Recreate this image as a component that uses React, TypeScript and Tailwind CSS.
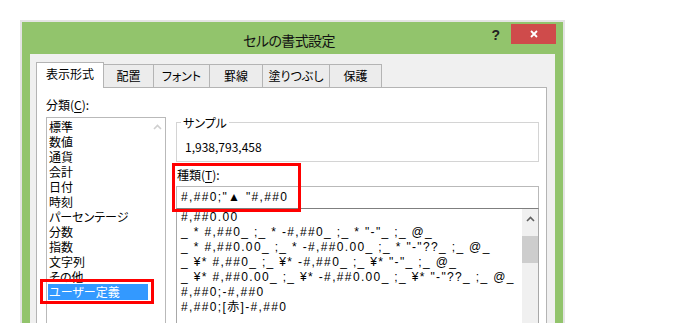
import { ReactNode } from "react";

const categories = [
  "標準",
  "数値",
  "通貨",
  "会計",
  "日付",
  "時刻",
  "パーセンテージ",
  "分数",
  "指数",
  "文字列",
  "その他",
  "ユーザー定義",
];

const formats = [
  "#,##0.00",
  '_ * #,##0_ ;_ * -#,##0_ ;_ * "-"_ ;_ @_',
  '_ * #,##0.00_ ;_ * -#,##0.00_ ;_ * "-"??_ ;_ @_',
  '_ ¥* #,##0_ ;_ ¥* -#,##0_ ;_ ¥* "-"_ ;_ @_',
  '_ ¥* #,##0.00_ ;_ ¥* -#,##0.00_ ;_ ¥* "-"??_ ;_ @_',
  "#,##0;-#,##0",
  "#,##0;[赤]-#,##0",
];

const tabs = [
  { label: "表示形式", w: "w-[68px]" },
  { label: "配置", w: "w-[50px]" },
  { label: "フォント", w: "w-[56px]" },
  { label: "罫線", w: "w-[53px]" },
  { label: "塗りつぶし", w: "w-[67px]" },
  { label: "保護", w: "w-[52px]" },
];

const fmtFont =
  "font-['Liberation_Sans','Noto_Sans_CJK_JP',sans-serif] text-[12px] tracking-[1.35px]";

function Label({ children, u, rest }: { children?: ReactNode; u: string; rest: string }) {
  return (
    <div className="text-[12px] leading-[15px] text-black">
      {children}(<span className="underline underline-offset-2">{u}</span>){rest}
    </div>
  );
}

function UpArrow({ color }: { color: string }) {
  return (
    <svg width="9" height="6" viewBox="0 0 9 6">
      <path d="M1 5 L4.5 1.5 L8 5" fill="none" stroke={color} strokeWidth="1.6" />
    </svg>
  );
}

export default function App() {
  return (
    <div className="h-[323px] w-[698px] overflow-hidden bg-white pl-[22px] pt-[22px] font-['Noto_Sans_CJK_JP',sans-serif] [font-feature-settings:'palt']">
      <div className="flex h-[320px] w-[541px] flex-col bg-[#92c46c] shadow-[0_0_0_2px_#e4e4e4]">
        {/* title bar */}
        <div className="grid h-[32px] shrink-0 grid-cols-[1fr_auto_1fr] pr-[7px] pt-[2px]">
          <div />
          <div className="pt-[3px] text-[14px] leading-[26px] tracking-[-0.6px] text-[#111]">
            セルの書式設定
          </div>
          <div className="flex items-start justify-end">
            <span className="mr-[11px] mt-[3px] font-['Liberation_Sans',sans-serif] text-[14px] font-bold leading-[16px] text-[#222]">
              ?
            </span>
            <button className="flex h-[20px] w-[45px] items-center justify-center bg-[#cf4b4b]">
              <svg width="8" height="8" viewBox="0 0 8 8">
                <path d="M1 1 L7 7 M7 1 L1 7" stroke="white" strokeWidth="1.8" />
              </svg>
            </button>
          </div>
        </div>

        {/* body */}
        <div className="ml-[8px] mr-[8px] flex flex-1 flex-col bg-[#f0f0f0] pl-[6px] pt-[8px]">
          <div className="flex items-end">
            {tabs.map((t, i) =>
              i === 0 ? (
                <div
                  key={t.label}
                  className={`relative z-10 -mb-px flex h-[26px] ${t.w} items-center justify-center border border-b-0 border-[#b4b4b4] bg-white pb-[3px] text-[12px] text-black`}
                >
                  {t.label}
                </div>
              ) : (
                <div
                  key={t.label}
                  className={`flex h-[23px] ${t.w} items-center justify-center border border-b-0 border-l-0 border-[#b4b4b4] bg-[#ececec] text-[12px] text-black`}
                >
                  {t.label}
                </div>
              )
            )}
          </div>

          <div className="relative flex w-[511px] flex-1 border border-[#b4b4b4] bg-white">
            {/* left column */}
            <div className="flex w-[139px] shrink-0 flex-col pl-[9px] pt-[9px]">
              <Label u="C" rest=":">分類</Label>
              <div className="mt-[5px] flex w-[120px] flex-1 border border-[#b9b9b9]">
                <div className="flex w-[102px] flex-col pt-px">
                  {categories.map((c, i) => (
                    <div
                      key={c}
                      className={
                        i === categories.length - 1
                          ? "ml-px h-[16px] w-[100px] bg-[#3399ff] pl-px text-[12px] leading-[16px] text-white"
                          : "h-[15px] whitespace-nowrap pl-[2px] text-[12px] leading-[15px] text-black"
                      }
                    >
                      {c}
                    </div>
                  ))}
                </div>
                <div className="flex flex-1 justify-center pt-[6px]">
                  <UpArrow color="#cfcfcf" />
                </div>
              </div>
            </div>

            {/* right column */}
            <div className="flex w-[363px] shrink-0 flex-col pt-[27px]">
              <fieldset className="h-[47px] border border-[#d4d4d4] px-[4px]">
                <legend className="px-[2px] text-[12px] leading-[15px] text-black">サンプル</legend>
                <div className="pl-[4px] pt-[9px] text-[12px] leading-[15px] text-black">
                  1,938,793,458
                </div>
              </fieldset>
              <div className="mt-[5px] pl-px">
                <Label u="T" rest=":">種類</Label>
              </div>
              <div
                className={`mt-[4px] h-[22px] border border-b-0 border-[#b9b9b9] pl-[4px] leading-[21px] text-black ${fmtFont}`}
              >
                #,##0;"▲ "#,##0
              </div>
              <div className="flex flex-1 border border-[#a8a8a8] border-t-[#7f7f7f]">
                <div className="flex flex-1 flex-col overflow-hidden pl-[4px] pt-px">
                  {formats.map((f) => (
                    <div key={f} className={`h-[15px] whitespace-pre leading-[15px] text-black ${fmtFont}`}>
                      {f}
                    </div>
                  ))}
                </div>
                <div className="flex w-[16px] flex-col items-center bg-[#f0f0f0]">
                  <div className="flex h-[17px] items-center justify-center pt-[2px]">
                    <UpArrow color="#606060" />
                  </div>
                  <div className="mt-[10px] h-[27px] w-full bg-[#cdcdcd]" />
                </div>
              </div>
            </div>

            {/* annotation boxes */}
            <div className="absolute left-[3px] top-[191px] h-[25px] w-[114px] border-[3px] border-[#f00]" />
            <div className="absolute left-[135px] top-[75px] h-[49px] w-[129px] border-[3px] border-[#f00]" />
          </div>
        </div>
      </div>
    </div>
  );
}
